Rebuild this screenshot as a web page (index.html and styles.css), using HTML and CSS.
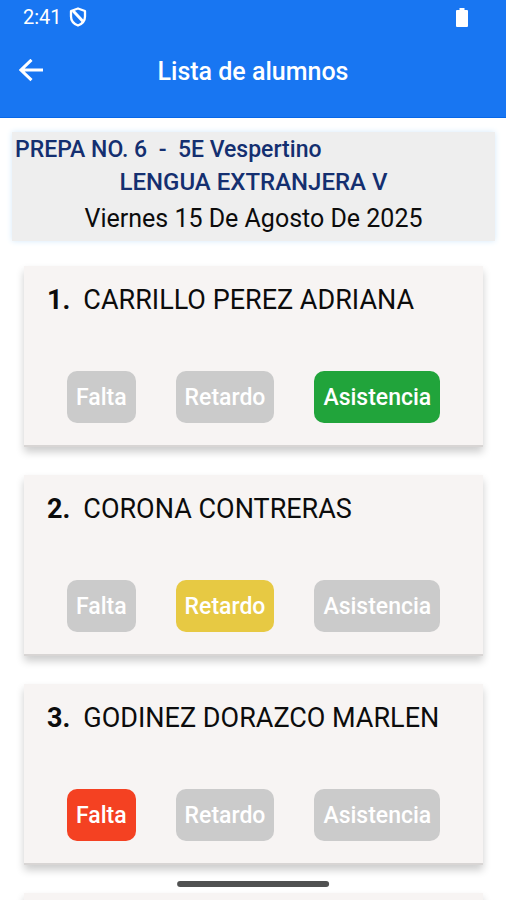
FILE: index.html
```html
<!DOCTYPE html>
<html lang="es">
<head>
<meta charset="utf-8">
<meta name="viewport" content="width=device-width, initial-scale=1">
<title>Lista de alumnos</title>
<link rel="stylesheet" href="styles.css">
</head>
<body>
<header class="app-header">
  <div class="status-bar">
    <span class="clock">2:41</span>
    <svg class="shield" viewBox="0 0 18 20" aria-hidden="true">
      <path d="M9 1.500 16 4V9.500C16 13.800 13 17 9 18.500 5 17 2 13.800 2 9.500V4Z" fill="none" stroke="currentColor" stroke-width="2.300" stroke-linejoin="round"/>
      <path d="M4 3.800 13.800 14.200" fill="none" stroke="currentColor" stroke-width="3"/>
    </svg>
    <svg class="battery" viewBox="0 0 12 19" aria-hidden="true">
      <path d="M3.500 0h5v2H11a1 1 0 0 1 1 1v15a1 1 0 0 1-1 1H1a1 1 0 0 1-1-1V3a1 1 0 0 1 1-1h2.500z" fill="currentColor"/>
    </svg>
  </div>
  <div class="toolbar">
    <button class="back" type="button" aria-label="Volver">
      <svg viewBox="0 0 24 24" aria-hidden="true"><path d="M24 11H2.500M12.500 .800 2 11 12.500 21.200" fill="none" stroke="currentColor" stroke-width="3"/></svg>
    </button>
    <h1 class="title">Lista de alumnos</h1>
  </div>
</header>
<main class="content">
  <section class="group">
    <p class="school">PREPA NO. 6 &nbsp;- &nbsp;5E Vespertino</p>
    <h2 class="subject">LENGUA EXTRANJERA V</h2>
    <p class="date">Viernes 15 De Agosto De 2025</p>
  </section>
  <ol class="students">
    <li class="card">
      <h3 class="name"><span class="number">1.</span>CARRILLO PEREZ ADRIANA</h3>
      <div class="actions">
        <button class="mark" type="button">Falta</button>
        <button class="mark" type="button">Retardo</button>
        <button class="mark present" type="button">Asistencia</button>
      </div>
    </li>
    <li class="card">
      <h3 class="name"><span class="number">2.</span>CORONA CONTRERAS</h3>
      <div class="actions">
        <button class="mark" type="button">Falta</button>
        <button class="mark late" type="button">Retardo</button>
        <button class="mark" type="button">Asistencia</button>
      </div>
    </li>
    <li class="card">
      <h3 class="name"><span class="number">3.</span>GODINEZ DORAZCO MARLEN</h3>
      <div class="actions">
        <button class="mark absent" type="button">Falta</button>
        <button class="mark" type="button">Retardo</button>
        <button class="mark" type="button">Asistencia</button>
      </div>
    </li>
    <li class="card"></li>
  </ol>
</main>
<div class="gesture-bar"></div>
</body>
</html>
```
FILE: styles.css
```css
* {
  box-sizing: border-box;
  margin: 0;
  padding: 0;
}

body {
  display: flex;
  flex-direction: column;
  height: 100vh;
  overflow: hidden;
  background: #fff;
  color: #0c0c0c;
  font-family: Roboto, "Liberation Sans", sans-serif;
}

.app-header {
  flex: none;
  height: 118px;
  background: #1876f2;
  border-bottom: 1px solid #0868e8;
  color: #fff;
}

.status-bar {
  display: flex;
  align-items: center;
  gap: 7px;
  height: 34px;
  padding: 0 38px 0 23px;
}

.clock {
  font-size: 20px;
  line-height: 34px;
}

.shield {
  width: 18px;
  height: 20px;
}

.battery {
  width: 12px;
  height: 19px;
  margin-left: auto;
}

.toolbar {
  display: grid;
  grid-template-columns: 48px 1fr 48px;
  align-items: center;
  height: 74px;
  padding: 0 7px;
}

.back {
  display: grid;
  place-items: center;
  width: 48px;
  height: 48px;
  border: 0;
  background: none;
  color: inherit;
}

.back svg {
  width: 24px;
  height: 24px;
}

.title {
  text-align: center;
  font-size: 25px;
  font-weight: 500;
}

.content {
  flex: 1;
  min-height: 0;
  overflow: hidden;
  padding: 14px 11px 0 12px;
}

.group {
  padding: 2px 3px;
  background: #eee;
  box-shadow: 0 0 6px #d4e9fa;
  text-align: center;
}

.school,
.subject {
  color: #142f70;
  font-weight: 500;
  line-height: 32px;
}

.school {
  font-size: 23px;
  text-align: left;
}

.subject {
  font-size: 24px;
}

.date {
  font-size: 25px;
  line-height: 41px;
}

.students {
  display: grid;
  grid-template-columns: minmax(0, 1fr);
  gap: 28px;
  padding: 25px 12px 0;
  list-style: none;
}

.card {
  min-height: 181px;
  padding: 16px 23px 22px;
  background: #f7f4f3;
  border-bottom: 2px solid #d8d5d4;
  box-shadow: 0 5px 8px rgba(0, 0, 0, 0.2);
}

.name {
  display: flex;
  gap: 13px;
  font-size: 27px;
  font-weight: 400;
  line-height: 36px;
}

.number {
  font-weight: 700;
}

.actions {
  display: flex;
  gap: 40px;
  padding: 53px 20px 0;
}

.mark {
  height: 52px;
  padding: 1px 9px 0;
  border: 0;
  border-radius: 10px;
  background: #cbcbcb;
  color: #fff;
  font: 500 23px Roboto, "Liberation Sans", sans-serif;
}

.present {
  background: #21a43b;
}

.late {
  background: #e7c943;
}

.absent {
  background: #f44122;
}

.gesture-bar {
  position: fixed;
  bottom: 13px;
  left: 50%;
  width: 30%;
  height: 6px;
  border-radius: 3px;
  background: #505151;
  transform: translateX(-50%);
}
```
